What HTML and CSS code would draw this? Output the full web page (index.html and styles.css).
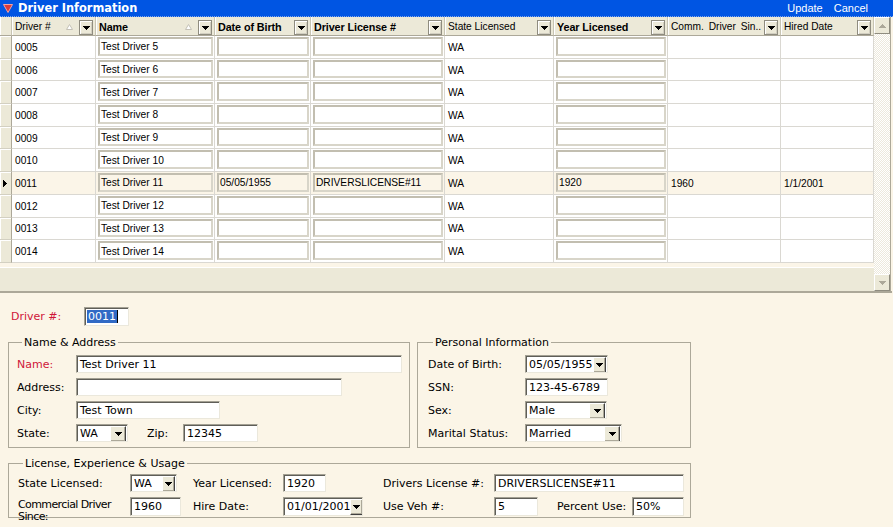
FILE: index.html
```html
<!DOCTYPE html>
<html>
<head>
<meta charset="utf-8">
<title>Driver Information</title>
<link rel="stylesheet" href="styles.css">
</head>
<body>
<div class="win">
  <div class="titlebar">
    <svg class="ticon" width="10" height="9" viewBox="0 0 10 9"><path d="M0.5 0.5 H9.5 L5 8.5 Z" fill="#d83a3a" stroke="#f3a2a2" stroke-width="1"/></svg>
    <span class="title">Driver Information</span>
    <span class="actions"><span>Update</span><span>Cancel</span></span>
  </div>

  <div class="gridwrap">
    <div class="grid">
      <div class="gh s"></div>
      <div class="gh"><span>Driver #</span><svg class="sort" width="7" height="6" viewBox="0 0 7 6"><path d="M3.5 0.5 L6.5 5.5 H0.5 Z" fill="#fff" stroke="#c4c1b6"/></svg><b class="dd"><svg width="7" height="4" viewBox="0 0 7 4"><path d="M0 0h7v1H0zM1 1h5v1H1zM2 2h3v1H2zM3 3h1v1H3z"/></svg></b></div>
      <div class="gh b"><span>Name</span><svg class="sort" width="7" height="6" viewBox="0 0 7 6"><path d="M3.5 0.5 L6.5 5.5 H0.5 Z" fill="#fff" stroke="#c4c1b6"/></svg><b class="dd"><svg width="7" height="4" viewBox="0 0 7 4"><path d="M0 0h7v1H0zM1 1h5v1H1zM2 2h3v1H2zM3 3h1v1H3z"/></svg></b></div>
      <div class="gh b"><span>Date of Birth</span><b class="dd"><svg width="7" height="4" viewBox="0 0 7 4"><path d="M0 0h7v1H0zM1 1h5v1H1zM2 2h3v1H2zM3 3h1v1H3z"/></svg></b></div>
      <div class="gh b"><span>Driver License #</span><b class="dd"><svg width="7" height="4" viewBox="0 0 7 4"><path d="M0 0h7v1H0zM1 1h5v1H1zM2 2h3v1H2zM3 3h1v1H3z"/></svg></b></div>
      <div class="gh"><span>State Licensed</span><b class="dd"><svg width="7" height="4" viewBox="0 0 7 4"><path d="M0 0h7v1H0zM1 1h5v1H1zM2 2h3v1H2zM3 3h1v1H3z"/></svg></b></div>
      <div class="gh b"><span>Year Licensed</span><b class="dd"><svg width="7" height="4" viewBox="0 0 7 4"><path d="M0 0h7v1H0zM1 1h5v1H1zM2 2h3v1H2zM3 3h1v1H3z"/></svg></b></div>
      <div class="gh"><span class="ws">Comm. Driver Sin..</span><b class="dd"><svg width="7" height="4" viewBox="0 0 7 4"><path d="M0 0h7v1H0zM1 1h5v1H1zM2 2h3v1H2zM3 3h1v1H3z"/></svg></b></div>
      <div class="gh"><span>Hired Date</span><b class="dd"><svg width="7" height="4" viewBox="0 0 7 4"><path d="M0 0h7v1H0zM1 1h5v1H1zM2 2h3v1H2zM3 3h1v1H3z"/></svg></b></div>

      <div class="row"><div class="c s"></div><div class="c">0005</div><div class="c t"><div class="tb">Test Driver 5</div></div><div class="c t"><div class="tb"></div></div><div class="c t"><div class="tb"></div></div><div class="c">WA</div><div class="c t"><div class="tb"></div></div><div class="c"></div><div class="c"></div></div>
      <div class="row"><div class="c s"></div><div class="c">0006</div><div class="c t"><div class="tb">Test Driver 6</div></div><div class="c t"><div class="tb"></div></div><div class="c t"><div class="tb"></div></div><div class="c">WA</div><div class="c t"><div class="tb"></div></div><div class="c"></div><div class="c"></div></div>
      <div class="row"><div class="c s"></div><div class="c">0007</div><div class="c t"><div class="tb">Test Driver 7</div></div><div class="c t"><div class="tb"></div></div><div class="c t"><div class="tb"></div></div><div class="c">WA</div><div class="c t"><div class="tb"></div></div><div class="c"></div><div class="c"></div></div>
      <div class="row"><div class="c s"></div><div class="c">0008</div><div class="c t"><div class="tb">Test Driver 8</div></div><div class="c t"><div class="tb"></div></div><div class="c t"><div class="tb"></div></div><div class="c">WA</div><div class="c t"><div class="tb"></div></div><div class="c"></div><div class="c"></div></div>
      <div class="row"><div class="c s"></div><div class="c">0009</div><div class="c t"><div class="tb">Test Driver 9</div></div><div class="c t"><div class="tb"></div></div><div class="c t"><div class="tb"></div></div><div class="c">WA</div><div class="c t"><div class="tb"></div></div><div class="c"></div><div class="c"></div></div>
      <div class="row"><div class="c s"></div><div class="c">0010</div><div class="c t"><div class="tb">Test Driver 10</div></div><div class="c t"><div class="tb"></div></div><div class="c t"><div class="tb"></div></div><div class="c">WA</div><div class="c t"><div class="tb"></div></div><div class="c"></div><div class="c"></div></div>
      <div class="row cur"><div class="c s"><svg width="4" height="7" viewBox="0 0 4 7"><path d="M0 0h1v7H0zM1 1h1v5H1zM2 2h1v3H2zM3 3h1v1H3z"/></svg></div><div class="c">0011</div><div class="c t"><div class="tb">Test Driver 11</div></div><div class="c t"><div class="tb">05/05/1955</div></div><div class="c t"><div class="tb">DRIVERSLICENSE#11</div></div><div class="c">WA</div><div class="c t"><div class="tb">1920</div></div><div class="c">1960</div><div class="c">1/1/2001</div></div>
      <div class="row"><div class="c s"></div><div class="c">0012</div><div class="c t"><div class="tb">Test Driver 12</div></div><div class="c t"><div class="tb"></div></div><div class="c t"><div class="tb"></div></div><div class="c">WA</div><div class="c t"><div class="tb"></div></div><div class="c"></div><div class="c"></div></div>
      <div class="row"><div class="c s"></div><div class="c">0013</div><div class="c t"><div class="tb">Test Driver 13</div></div><div class="c t"><div class="tb"></div></div><div class="c t"><div class="tb"></div></div><div class="c">WA</div><div class="c t"><div class="tb"></div></div><div class="c"></div><div class="c"></div></div>
      <div class="row"><div class="c s"></div><div class="c">0014</div><div class="c t"><div class="tb">Test Driver 14</div></div><div class="c t"><div class="tb"></div></div><div class="c t"><div class="tb"></div></div><div class="c">WA</div><div class="c t"><div class="tb"></div></div><div class="c"></div><div class="c"></div></div>

      <div class="filler"></div>
    </div>
    <div class="vscroll">
      <div class="sb"><svg width="7" height="4" viewBox="0 0 7 4"><path d="M3 0h1v1H3zM2 1h3v1H2zM1 2h5v1H1zM0 3h7v1H0z" fill="#aca899"/></svg></div>
      <div class="sb dn"><svg width="7" height="4" viewBox="0 0 7 4"><path d="M0 0h7v1H0zM1 1h5v1H1zM2 2h3v1H2zM3 3h1v1H3z" fill="#aca899"/></svg></div>
    </div>
  </div>

  <div class="form">
    <div class="idrow">
      <label class="req">Driver #:</label>
      <div class="inp w-id"><span class="hl">0011</span><span class="caret"></span></div>
    </div>

    <div class="groups">
      <fieldset class="grp na">
        <legend>Name &amp; Address</legend>
        <div class="frow"><label class="req">Name:</label><div class="inp w-name">Test Driver 11</div></div>
        <div class="frow"><label>Address:</label><div class="inp w-addr"></div></div>
        <div class="frow"><label>City:</label><div class="inp w-city">Test Town</div></div>
        <div class="frow"><label>State:</label><div class="inp sel w-state"><span>WA</span><b class="btn"><svg width="7" height="4" viewBox="0 0 7 4"><path d="M0 0h7v1H0zM1 1h5v1H1zM2 2h3v1H2zM3 3h1v1H3z"/></svg></b></div><label class="zip">Zip:</label><div class="inp w-zip">12345</div></div>
      </fieldset>

      <fieldset class="grp pi">
        <legend>Personal Information</legend>
        <div class="frow"><label>Date of Birth:</label><div class="inp sel date w-dob"><span>05/05/1955</span><b class="btn"><svg width="7" height="4" viewBox="0 0 7 4"><path d="M0 0h7v1H0zM1 1h5v1H1zM2 2h3v1H2zM3 3h1v1H3z"/></svg></b></div></div>
        <div class="frow"><label>SSN:</label><div class="inp w-ssn">123-45-6789</div></div>
        <div class="frow"><label>Sex:</label><div class="inp sel w-sex"><span>Male</span><b class="btn"><svg width="7" height="4" viewBox="0 0 7 4"><path d="M0 0h7v1H0zM1 1h5v1H1zM2 2h3v1H2zM3 3h1v1H3z"/></svg></b></div></div>
        <div class="frow"><label>Marital Status:</label><div class="inp sel w-mar"><span>Married</span><b class="btn"><svg width="7" height="4" viewBox="0 0 7 4"><path d="M0 0h7v1H0zM1 1h5v1H1zM2 2h3v1H2zM3 3h1v1H3z"/></svg></b></div></div>
      </fieldset>
    </div>

    <fieldset class="grp lic">
      <legend>License, Experience &amp; Usage</legend>
      <div class="lgrid">
        <label>State Licensed:</label>
        <div class="inp sel w-sl"><span>WA</span><b class="btn"><svg width="7" height="4" viewBox="0 0 7 4"><path d="M0 0h7v1H0zM1 1h5v1H1zM2 2h3v1H2zM3 3h1v1H3z"/></svg></b></div>
        <label>Year Licensed:</label>
        <div class="inp w-yl">1920</div>
        <label>Drivers License #:</label>
        <div class="inp w-dl">DRIVERSLICENSE#11</div>

        <label class="two">Commercial Driver<br>Since:</label>
        <div class="inp w-cd">1960</div>
        <label>Hire Date:</label>
        <div class="inp sel date w-hd"><span>01/01/2001</span><b class="btn"><svg width="7" height="4" viewBox="0 0 7 4"><path d="M0 0h7v1H0zM1 1h5v1H1zM2 2h3v1H2zM3 3h1v1H3z"/></svg></b></div>
        <label>Use Veh #:</label>
        <div class="last"><div class="inp w-uv">5</div><label>Percent Use:</label><div class="inp w-pu">50%</div></div>
      </div>
    </fieldset>
  </div>
</div>
</body>
</html>
```

FILE: styles.css
```css
* { box-sizing: border-box; }
html, body { margin: 0; padding: 0; }
body {
  width: 893px;
  height: 527px;
  overflow: hidden;
  background: #fbf5e7;
  font-family: "DejaVu Sans", Verdana, sans-serif;
  font-size: 11px;
  color: #000;
}
.win { display: flex; flex-direction: column; height: 527px; }

/* title bar */
.titlebar {
  height: 17px;
  background: #0055e3;
  border-bottom: 1px dotted #7ea6ee;
  display: flex;
  align-items: center;
  color: #fff;
  padding-left: 3px;
}
.ticon { display: block; margin-top: 1px; }
.title {
  margin-left: 5px;
  font-weight: bold;
  font-size: 11.4px;
}
.actions {
  margin-left: auto;
  padding-right: 25px;
  display: flex;
  gap: 11px;
  font-family: "Liberation Sans", Arial, sans-serif;
  font-size: 11px;
}

/* grid */
.gridwrap {
  height: 276px;
  display: flex;
  border-bottom: 2px solid #aca899;
  width: 892px;
  background: #fbf5e7;
}
.grid {
  display: grid;
  grid-template-columns: 12px 84px 119px 96px 134px 109px 114px 113px 93px;
  grid-template-rows: 19px repeat(10, 22.7px) 1fr;
  width: 874px;
  background: #fff;
  font-family: "Liberation Sans", Arial, sans-serif;
  font-size: 10.2px;
}
.gh {
  background: #ece9d8;
  border-right: 1px solid #c7c4b3;
  border-bottom: 1px solid #aca899;
  box-shadow: inset 1px 0 #fff;
  display: flex;
  align-items: center;
  padding: 1px 2px 0 3px;
  white-space: nowrap;
  overflow: hidden;
}
.gh.b { font-weight: bold; font-size: 10.8px; letter-spacing: -0.1px; }
.gh .ws { word-spacing: 2px; }
.gh .sort { margin-left: auto; margin-right: 6px; display: block; }
.gh .dd {
  width: 14px;
  height: 15px;
  margin-left: auto;
  align-self: flex-end;
  background: #ece9d8;
  border: 1px solid #8f8c7f;
  box-shadow: inset 1px 1px #fff, inset -1px -1px #d2cfc1;
  display: flex;
  align-items: center;
  justify-content: center;
  flex: none;
}
.gh .sort + .dd { margin-left: 0; }
.gh .dd svg { display: block; }
.gh.s { padding: 0; }

.row { display: contents; }
.c {
  border-right: 1px solid #dad8d2;
  border-bottom: 1px solid #dad8d2;
  display: flex;
  align-items: center;
  padding: 1px 0 0 3px;
  white-space: nowrap;
  overflow: hidden;
}
.c.t { padding: 1px 1px 2px 2px; align-items: stretch; }
.tb {
  flex: 1;
  border: 2px solid;
  border-color: #c2beb0 #d8d5c9 #d8d5c9 #c2beb0;
  background: #fff;
  display: flex;
  align-items: center;
  padding: 1px 0 0 1px;
}
.c.s {
  background: #ece9d8;
  border-right: 1px solid #aca899;
  border-bottom: 1px solid #d3d0c2;
  box-shadow: inset 1px 1px #fff;
  padding-left: 3px;
}
.c.s svg { display: block; }
.cur .c { background: #fbf5e8; }
.cur .tb { background: #fbf5e8; }
.cur .c.s { background: #ece9d8; }

.filler {
  grid-column: 1 / -1;
  background: #ece9d8;
  border-top: 4px solid #fbf5e8;
  box-shadow: inset 0 1px #fff;
}

.vscroll {
  width: 17px;
  display: flex;
  flex-direction: column;
  background: repeating-conic-gradient(#fff 0 25%, #ede9dc 0 50%) 0 0 / 2px 2px;
  border-right: 1px solid #aca899;
}
.sb {
  width: 16px;
  height: 17px;
  background: #ece9d8;
  border: 1px solid;
  border-color: #fff #8f8c7f #8f8c7f #fff;
  display: flex;
  align-items: center;
  justify-content: center;
}
.sb svg { display: block; }
.sb.dn { margin-top: auto; }

/* form */
.form { padding: 0; }
.idrow {
  display: flex;
  align-items: center;
  margin-top: 14px;
  height: 19px;
  padding-left: 11px;
}
.idrow label { width: 73px; }
label.req, .req { color: #d0163a; }

.inp {
  height: 18px;
  background: #fff;
  border: 1px solid;
  border-color: #a3a093 #ebe8dc #ebe8dc #a3a093;
  box-shadow: inset 1px 1px 0 #5f5e58;
  padding: 0 2px 0 3px;
  display: flex;
  align-items: center;
  white-space: nowrap;
  overflow: hidden;
  flex: none;
}
.w-id { width: 45px; height: 19px; padding-left: 2px; }
.hl { background: #316ac5; color: #fff; padding: 0 1px; line-height: 13px; }
.caret { width: 1px; height: 13px; background: #000; }

.groups {
  display: flex;
  gap: 7px;
  margin: 10px 0 0 8px;
}
.grp {
  margin: 0;
  border: 1px solid #aca899;
  padding: 0;
  min-width: 0;
}
.grp legend {
  padding: 0 2px;
  margin-left: 5px;
  line-height: 13px;
}
.na { width: 402px; padding: 6px 0 5px 8px; }
.pi { width: 274px; padding: 6px 0 5px 10px; }
.frow {
  display: flex;
  align-items: center;
  height: 18px;
  margin-bottom: 5px;
}
.frow:last-child { margin-bottom: 0; }
.na .frow > label:first-child { width: 59px; }
.pi .frow > label:first-child { width: 97px; }
.frow .zip { margin-left: 19px; width: 36px; }

.w-name { width: 326px; }
.w-addr { width: 266px; }
.w-city { width: 144px; }
.w-state { width: 52px; }
.w-zip { width: 75px; }
.w-dob { width: 83px; }
.w-ssn { width: 83px; }
.w-sex { width: 82px; }
.w-mar { width: 97px; }
.w-sl { width: 47px; }
.w-yl { width: 43px; }
.w-dl { width: 190px; }
.w-cd { width: 51px; height: 19px; }
.w-hd { width: 80px; height: 19px; }
.w-uv { width: 44px; height: 19px; }
.w-pu { width: 52px; height: 19px; }

.sel { padding-right: 1px; }
.sel > span { flex: 1; }
.sel .btn {
  width: 16px;
  height: 16px;
  margin-top: 1px;
  background: #ece9d8;
  border: 1px solid;
  border-color: #fff #404040 #404040 #fff;
  box-shadow: inset -1px -1px #aca899;
  display: flex;
  align-items: center;
  justify-content: center;
  flex: none;
}
.sel .btn svg { display: block; }
.date .btn { width: 13px; }
.w-sl .btn { width: 13px; }

.lic {
  margin: 9px 0 0 8px;
  width: 683px;
  padding: 4px 0 1px 9px;
}
.lgrid {
  display: grid;
  grid-template-columns: 112px 63px 90px 100px 111px 1fr;
  grid-template-rows: 18px 19px;
  row-gap: 5px;
  align-items: center;
}
.lgrid .two {
  align-self: start;
  line-height: 12px;
  margin-top: 2px;
  letter-spacing: -0.6px;
  white-space: nowrap;
}
.last { display: flex; align-items: center; }
.last label { margin-left: 19px; width: 75px; }
```
